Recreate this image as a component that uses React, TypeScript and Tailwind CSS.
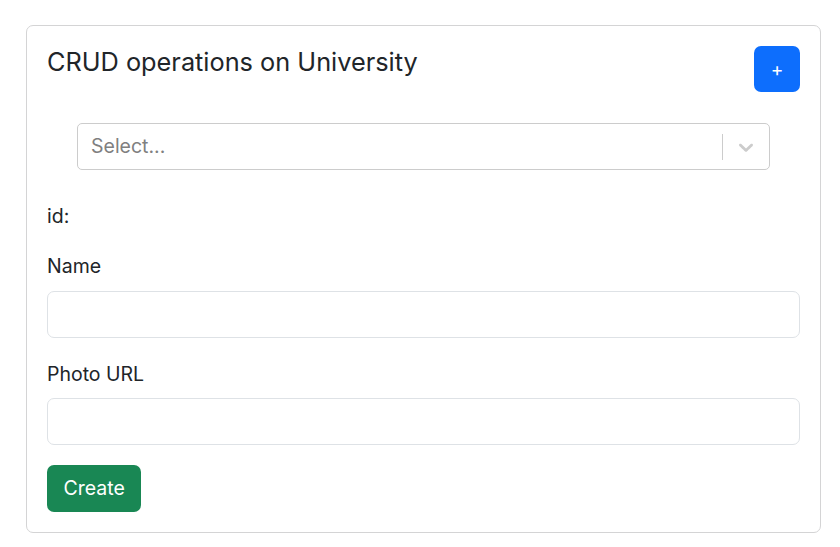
import React from "react";

const ChevronDown = () => (
  <svg width="24" height="24" viewBox="0 0 20 20" aria-hidden="true" className="fill-[#cccccc]">
    <path d="M4.516 7.548c0.436-0.446 1.043-0.481 1.576 0l3.908 3.747 3.908-3.747c0.533-0.481 1.141-0.446 1.574 0 0.436 0.445 0.408 1.197 0 1.615-0.406 0.418-4.695 4.502-4.695 4.502-0.217 0.223-0.502 0.335-0.787 0.335s-0.57-0.112-0.789-0.335c0 0-4.287-4.084-4.695-4.502s-0.436-1.17 0-1.615z" />
  </svg>
);

const Field = ({ label, className = "" }: { label: string; className?: string }) => (
  <div className={className}>
    <label className="block text-[19.5px] leading-[28.8px] mb-[10px]">{label}</label>
    <input
      type="text"
      className="block w-full h-[47px] rounded-[7px] border border-[#dee2e6] bg-white px-[14px] text-[19.5px] outline-none"
    />
  </div>
);

export default function App() {
  return (
    <div className="min-h-screen bg-white pt-[25px] pl-[26px] font-['Inter',sans-serif] text-[#212529]">
      <div className="w-[795px] rounded-[7px] border border-[#d4d4d5] p-5">
        {/* header */}
        <div className="flex items-start justify-between">
          <h5 className="pt-[2px] text-[25.3px] leading-[28.8px] font-normal">CRUD operations on University</h5>
          <button className="flex h-[46px] w-[46px] items-center justify-center rounded-[7px] bg-[#0d6efd] text-[19.2px] text-white">
            +
          </button>
        </div>

        {/* react-select style dropdown */}
        <div className="mx-[30px] mt-[31px] flex h-[47px] items-center rounded-[5px] border border-[#cccccc] bg-white">
          <div className="flex-1 pl-[13px] pt-px text-[19.5px] text-[#808080]">Select...</div>
          <span className="h-[26px] w-px bg-[#cccccc]" />
          <div className="flex items-center pl-[11px] pr-[11px]">
            <ChevronDown />
          </div>
        </div>

        <div className="mt-[32px] text-[19.5px] leading-[28.8px]">id:</div>

        <Field label="Name" className="mt-[21px]" />
        <Field label="Photo URL" className="mt-[22px]" />

        <button className="mt-[20px] h-[47px] rounded-[7px] bg-[#198754] px-[16.5px] text-[19.5px] text-white">
          Create
        </button>
      </div>
    </div>
  );
}
